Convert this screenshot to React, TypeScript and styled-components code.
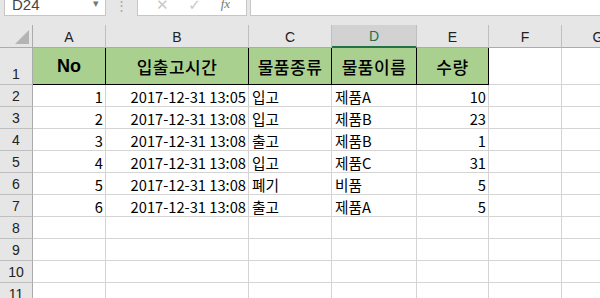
import React from 'react';
import styled, { createGlobalStyle } from 'styled-components';

const GlobalStyle = createGlobalStyle`
    html, body {
        margin:0;
        padding:0;
        background:#e6e6e6;
        overflow:hidden;
    }
    * { box-sizing:border-box; }
`;

const columns = ['A', 'B', 'C', 'D', 'E', 'F', 'G'];
const headings = ['No', '입출고시간', '물품종류', '물품이름', '수량'];

const rows = [
    { no: 1, time: '2017-12-31 13:05', kind: '입고', name: '제품A', qty: 10 },
    { no: 2, time: '2017-12-31 13:08', kind: '입고', name: '제품B', qty: 23 },
    { no: 3, time: '2017-12-31 13:08', kind: '출고', name: '제품B', qty: 1 },
    { no: 4, time: '2017-12-31 13:08', kind: '입고', name: '제품C', qty: 31 },
    { no: 5, time: '2017-12-31 13:08', kind: '폐기', name: '비품', qty: 5 },
    { no: 6, time: '2017-12-31 13:08', kind: '출고', name: '제품A', qty: 5 },
];

const emptyRows = [8, 9, 10, 11];

const App = () => {
    return (
        <Page>
            <GlobalStyle />
            <FormulaBar>
                <NameBox>
                    <span>D24</span>
                    <Caret>▾</Caret>
                </NameBox>
                <Dots>⋮</Dots>
                <ButtonBox>
                    <span>✕</span>
                    <span>✓</span>
                    <Fx>fx</Fx>
                </ButtonBox>
                <FormulaInput />
            </FormulaBar>
            <Sheet>
                <Corner><Triangle /></Corner>
                {columns.map((c) => (
                    <ColHeader key={c} $selected={c === 'D'}>{c}</ColHeader>
                ))}

                <RowHeader>1</RowHeader>
                {headings.map((h) => (
                    <HeadCell key={h} $latin={h === 'No'}>{h}</HeadCell>
                ))}
                <Cell />
                <Cell />

                {rows.map((r) => (
                    <React.Fragment key={r.no}>
                        <RowHeader>{r.no + 1}</RowHeader>
                        <Cell $align="right">{r.no}</Cell>
                        <Cell $align="right">{r.time}</Cell>
                        <Cell>{r.kind}</Cell>
                        <Cell>{r.name}</Cell>
                        <Cell $align="right">{r.qty}</Cell>
                        <Cell />
                        <Cell />
                    </React.Fragment>
                ))}

                {emptyRows.map((n) => (
                    <React.Fragment key={n}>
                        <RowHeader>{n}</RowHeader>
                        {columns.map((c) => <Cell key={c} />)}
                    </React.Fragment>
                ))}
            </Sheet>
        </Page>
    );
};

export default App;

const Page = styled.div`
    width:600px;
    height:298px;
    overflow:hidden;
    font-family:"Noto Sans CJK KR", "Noto Sans", sans-serif;
    background:#e6e6e6;
`;

const FormulaBar = styled.div`
    height:25px;
    display:flex;
    align-items:flex-start;
    overflow:hidden;
`;

const NameBox = styled.div`
    margin:-10px 0 0 4px;
    width:102px;
    height:26px;
    background:#fff;
    border:1px solid #c6c6c6;
    display:flex;
    align-items:flex-end;
    justify-content:space-between;
    padding:0 6px 2px 7px;
    font-family:"Liberation Sans", sans-serif;
    font-size:15px;
    color:#444;
`;

const Caret = styled.span`
    font-size:11px;
    color:#777;
    align-self:flex-start;
    margin-top:6px;
`;

const Dots = styled.div`
    width:31px;
    text-align:center;
    color:#a8a8a8;
    font-size:13px;
    line-height:14px;
    margin-top:-2px;
`;

const ButtonBox = styled.div`
    margin-top:-10px;
    width:110px;
    height:26px;
    background:#fff;
    border:1px solid #c6c6c6;
    display:flex;
    align-items:flex-end;
    justify-content:space-around;
    padding:0 6px 1px 8px;
    color:#c8c8c8;
    font-family:"DejaVu Sans", sans-serif;
    font-size:15px;
`;

const Fx = styled.span`
    font-family:"Liberation Serif", serif;
    font-style:italic;
    font-size:13px;
    color:#777;
    margin-bottom:2px;
`;

const FormulaInput = styled.div`
    margin:-10px 0 0 3px;
    flex:1;
    height:26px;
    background:#fff;
    border:1px solid #c6c6c6;
    border-right:none;
`;

const Sheet = styled.div`
    display:grid;
    width:635px;
    grid-template-columns:33px 73px 143px 83px 85px 72px 73px 73px;
    grid-template-rows:23px 37px repeat(10, 22px);
    background:#fff;
`;

const Corner = styled.div`
    background:#e6e6e6;
    border-right:1px solid #ababab;
    border-bottom:1px solid #ababab;
    display:flex;
    align-items:flex-end;
    justify-content:flex-end;
    padding:0 3px 3px 0;
`;

const Triangle = styled.div`
    width:0;
    height:0;
    border-left:14px solid transparent;
    border-bottom:14px solid #b4b4b4;
`;

const ColHeader = styled.div<{ $selected?: boolean }>`
    background:${(p) => (p.$selected ? '#d2d2d2' : '#e6e6e6')};
    color:${(p) => (p.$selected ? '#217346' : '#222')};
    border-right:1px solid #bfbfbf;
    border-bottom:${(p) => (p.$selected ? '2px solid #217346' : '1px solid #ababab')};
    display:flex;
    align-items:center;
    justify-content:center;
    font-family:"Liberation Sans", sans-serif;
    font-size:14px;
    padding-top:1px;
`;

const RowHeader = styled.div`
    background:#e6e6e6;
    color:#222;
    border-right:1px solid #ababab;
    border-bottom:1px solid #bfbfbf;
    display:flex;
    align-items:flex-end;
    justify-content:center;
    font-family:"Liberation Sans", sans-serif;
    font-size:14px;
    padding-bottom:2px;
`;

const Cell = styled.div<{ $align?: 'left' | 'right' }>`
    border-right:1px solid #d4d4d4;
    border-bottom:1px solid #d4d4d4;
    display:flex;
    align-items:center;
    justify-content:${(p) => (p.$align === 'right' ? 'flex-end' : 'flex-start')};
    padding:1px 2px 0 3px;
    font-size:14.7px;
    color:#000;
    white-space:nowrap;
    overflow:hidden;
`;

const HeadCell = styled.div<{ $latin?: boolean }>`
    background:#a9d08e;
    border-right:1px solid #000;
    border-bottom:1px solid #000;
    display:flex;
    align-items:center;
    justify-content:center;
    font-size:${(p) => (p.$latin ? '18px' : '17px')};
    font-weight:${(p) => (p.$latin ? 700 : 500)};
    font-family:${(p) => (p.$latin ? '"Liberation Sans", sans-serif' : 'inherit')};
    letter-spacing:${(p) => (p.$latin ? '0' : '0.5px')};
    color:#000;
`;
